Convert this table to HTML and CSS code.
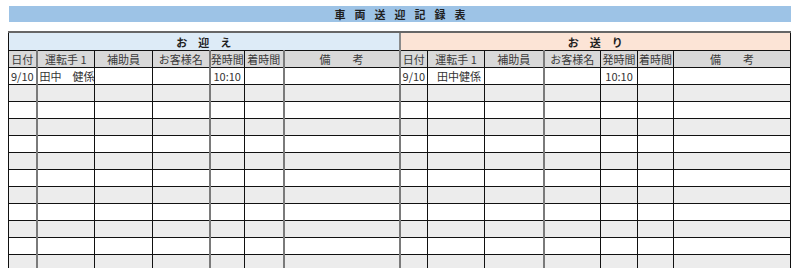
FILE: index.html
```html
<!DOCTYPE html>
<html lang="ja">
<head>
<meta charset="utf-8">
<title>車両送迎記録表</title>
<link rel="stylesheet" href="styles.css">
</head>
<body>
<div class="page">
  <div class="title">車両送迎記録表</div>
  <table class="log">
    <colgroup>
      <col class="c-date"><col class="c-drv"><col class="c-asst"><col class="c-cust"><col class="c-dep"><col class="c-arr"><col class="c-note">
      <col class="c-date"><col class="c-drv2"><col class="c-asst2"><col class="c-cust"><col class="c-dep2"><col class="c-arr2"><col class="c-note2">
    </colgroup>
    <thead>
      <tr class="sec">
        <th colspan="7" class="pick">お迎え</th>
        <th colspan="7" class="drop">お送り</th>
      </tr>
      <tr class="hdr">
        <th>日付</th><th>運転手 1</th><th>補助員</th><th>お客様名</th><th>発時間</th><th>着時間</th><th>備　　考</th>
        <th>日付</th><th>運転手 1</th><th>補助員</th><th>お客様名</th><th>発時間</th><th>着時間</th><th>備　　考</th>
      </tr>
    </thead>
    <tbody>
      <tr><td class="l">9/10</td><td class="l">田中　健係</td><td></td><td></td><td>10:10</td><td></td><td></td><td class="l">9/10</td><td class="nm">田中健係</td><td></td><td></td><td>10:10</td><td></td><td></td></tr>
      <tr><td></td><td></td><td></td><td></td><td></td><td></td><td></td><td></td><td></td><td></td><td></td><td></td><td></td><td></td></tr>
      <tr><td></td><td></td><td></td><td></td><td></td><td></td><td></td><td></td><td></td><td></td><td></td><td></td><td></td><td></td></tr>
      <tr><td></td><td></td><td></td><td></td><td></td><td></td><td></td><td></td><td></td><td></td><td></td><td></td><td></td><td></td></tr>
      <tr><td></td><td></td><td></td><td></td><td></td><td></td><td></td><td></td><td></td><td></td><td></td><td></td><td></td><td></td></tr>
      <tr><td></td><td></td><td></td><td></td><td></td><td></td><td></td><td></td><td></td><td></td><td></td><td></td><td></td><td></td></tr>
      <tr><td></td><td></td><td></td><td></td><td></td><td></td><td></td><td></td><td></td><td></td><td></td><td></td><td></td><td></td></tr>
      <tr><td></td><td></td><td></td><td></td><td></td><td></td><td></td><td></td><td></td><td></td><td></td><td></td><td></td><td></td></tr>
      <tr><td></td><td></td><td></td><td></td><td></td><td></td><td></td><td></td><td></td><td></td><td></td><td></td><td></td><td></td></tr>
      <tr><td></td><td></td><td></td><td></td><td></td><td></td><td></td><td></td><td></td><td></td><td></td><td></td><td></td><td></td></tr>
      <tr><td></td><td></td><td></td><td></td><td></td><td></td><td></td><td></td><td></td><td></td><td></td><td></td><td></td><td></td></tr>
      <tr><td></td><td></td><td></td><td></td><td></td><td></td><td></td><td></td><td></td><td></td><td></td><td></td><td></td><td></td></tr>
    </tbody>
  </table>
</div>
</body>
</html>
```

FILE: styles.css
```css
html, body {
  margin: 0;
  padding: 0;
  background: #ffffff;
  overflow: hidden;
}
.page {
  padding: 6px 9px 0 8px;
  font-family: "Noto Sans CJK JP", "Noto Sans", sans-serif;
  color: #333333;
  font-size: 11px;
}
.title {
  margin-left: 1px;
  width: 782px;
  height: 16px;
  line-height: 16px;
  background: #9dc3e6;
  text-align: center;
  font-weight: bold;
  letter-spacing: 9px;
  text-indent: 9px;
  color: #1e1e1e;
}
.log {
  margin-top: 9px;
  border-collapse: collapse;
  table-layout: fixed;
  width: 783px;
}
.c-date { width: 28px; }
.c-drv { width: 58px; }
.c-asst { width: 58px; }
.c-cust { width: 57px; }
.c-dep { width: 35px; }
.c-arr { width: 39px; }
.c-note { width: 116px; }
.c-drv2 { width: 57px; }
.c-asst2 { width: 59px; }
.c-dep2 { width: 37px; }
.c-arr2 { width: 36px; }
.c-note2 { width: 117px; }

.log th, .log td {
  border: 1px solid #111111;
  padding: 0;
  height: 16px;
  line-height: 16px;
  text-align: center;
  font-weight: normal;
  white-space: nowrap;
  overflow: hidden;
}
.sec th {
  height: 17px;
  font-weight: bold;
  letter-spacing: 11px;
  text-indent: 11px;
  color: #1e1e1e;
  border-top: 2px solid #666666;
}
.sec .pick { background: #ddebf7; }
.sec .drop { background: #fce4d6; border-left: 2px solid #8a8a8a; }
.hdr th {
  background: #d9d9d9;
  color: #3a3a3a;
}
.log td.l {
  text-align: left;
  padding-left: 2px;
}
.log td.nm {
  text-align: left;
  padding-left: 9px;
}
tbody tr:nth-child(even) td {
  background: #ececec;
}
.hdr th:nth-child(2), tbody td:nth-child(2),
.hdr th:nth-child(5), tbody td:nth-child(5),
.hdr th:nth-child(7), tbody td:nth-child(7),
.hdr th:nth-child(8), tbody td:nth-child(8),
.hdr th:nth-child(11), tbody td:nth-child(11) {
  border-left: 2px solid #7a7a7a;
}
```
